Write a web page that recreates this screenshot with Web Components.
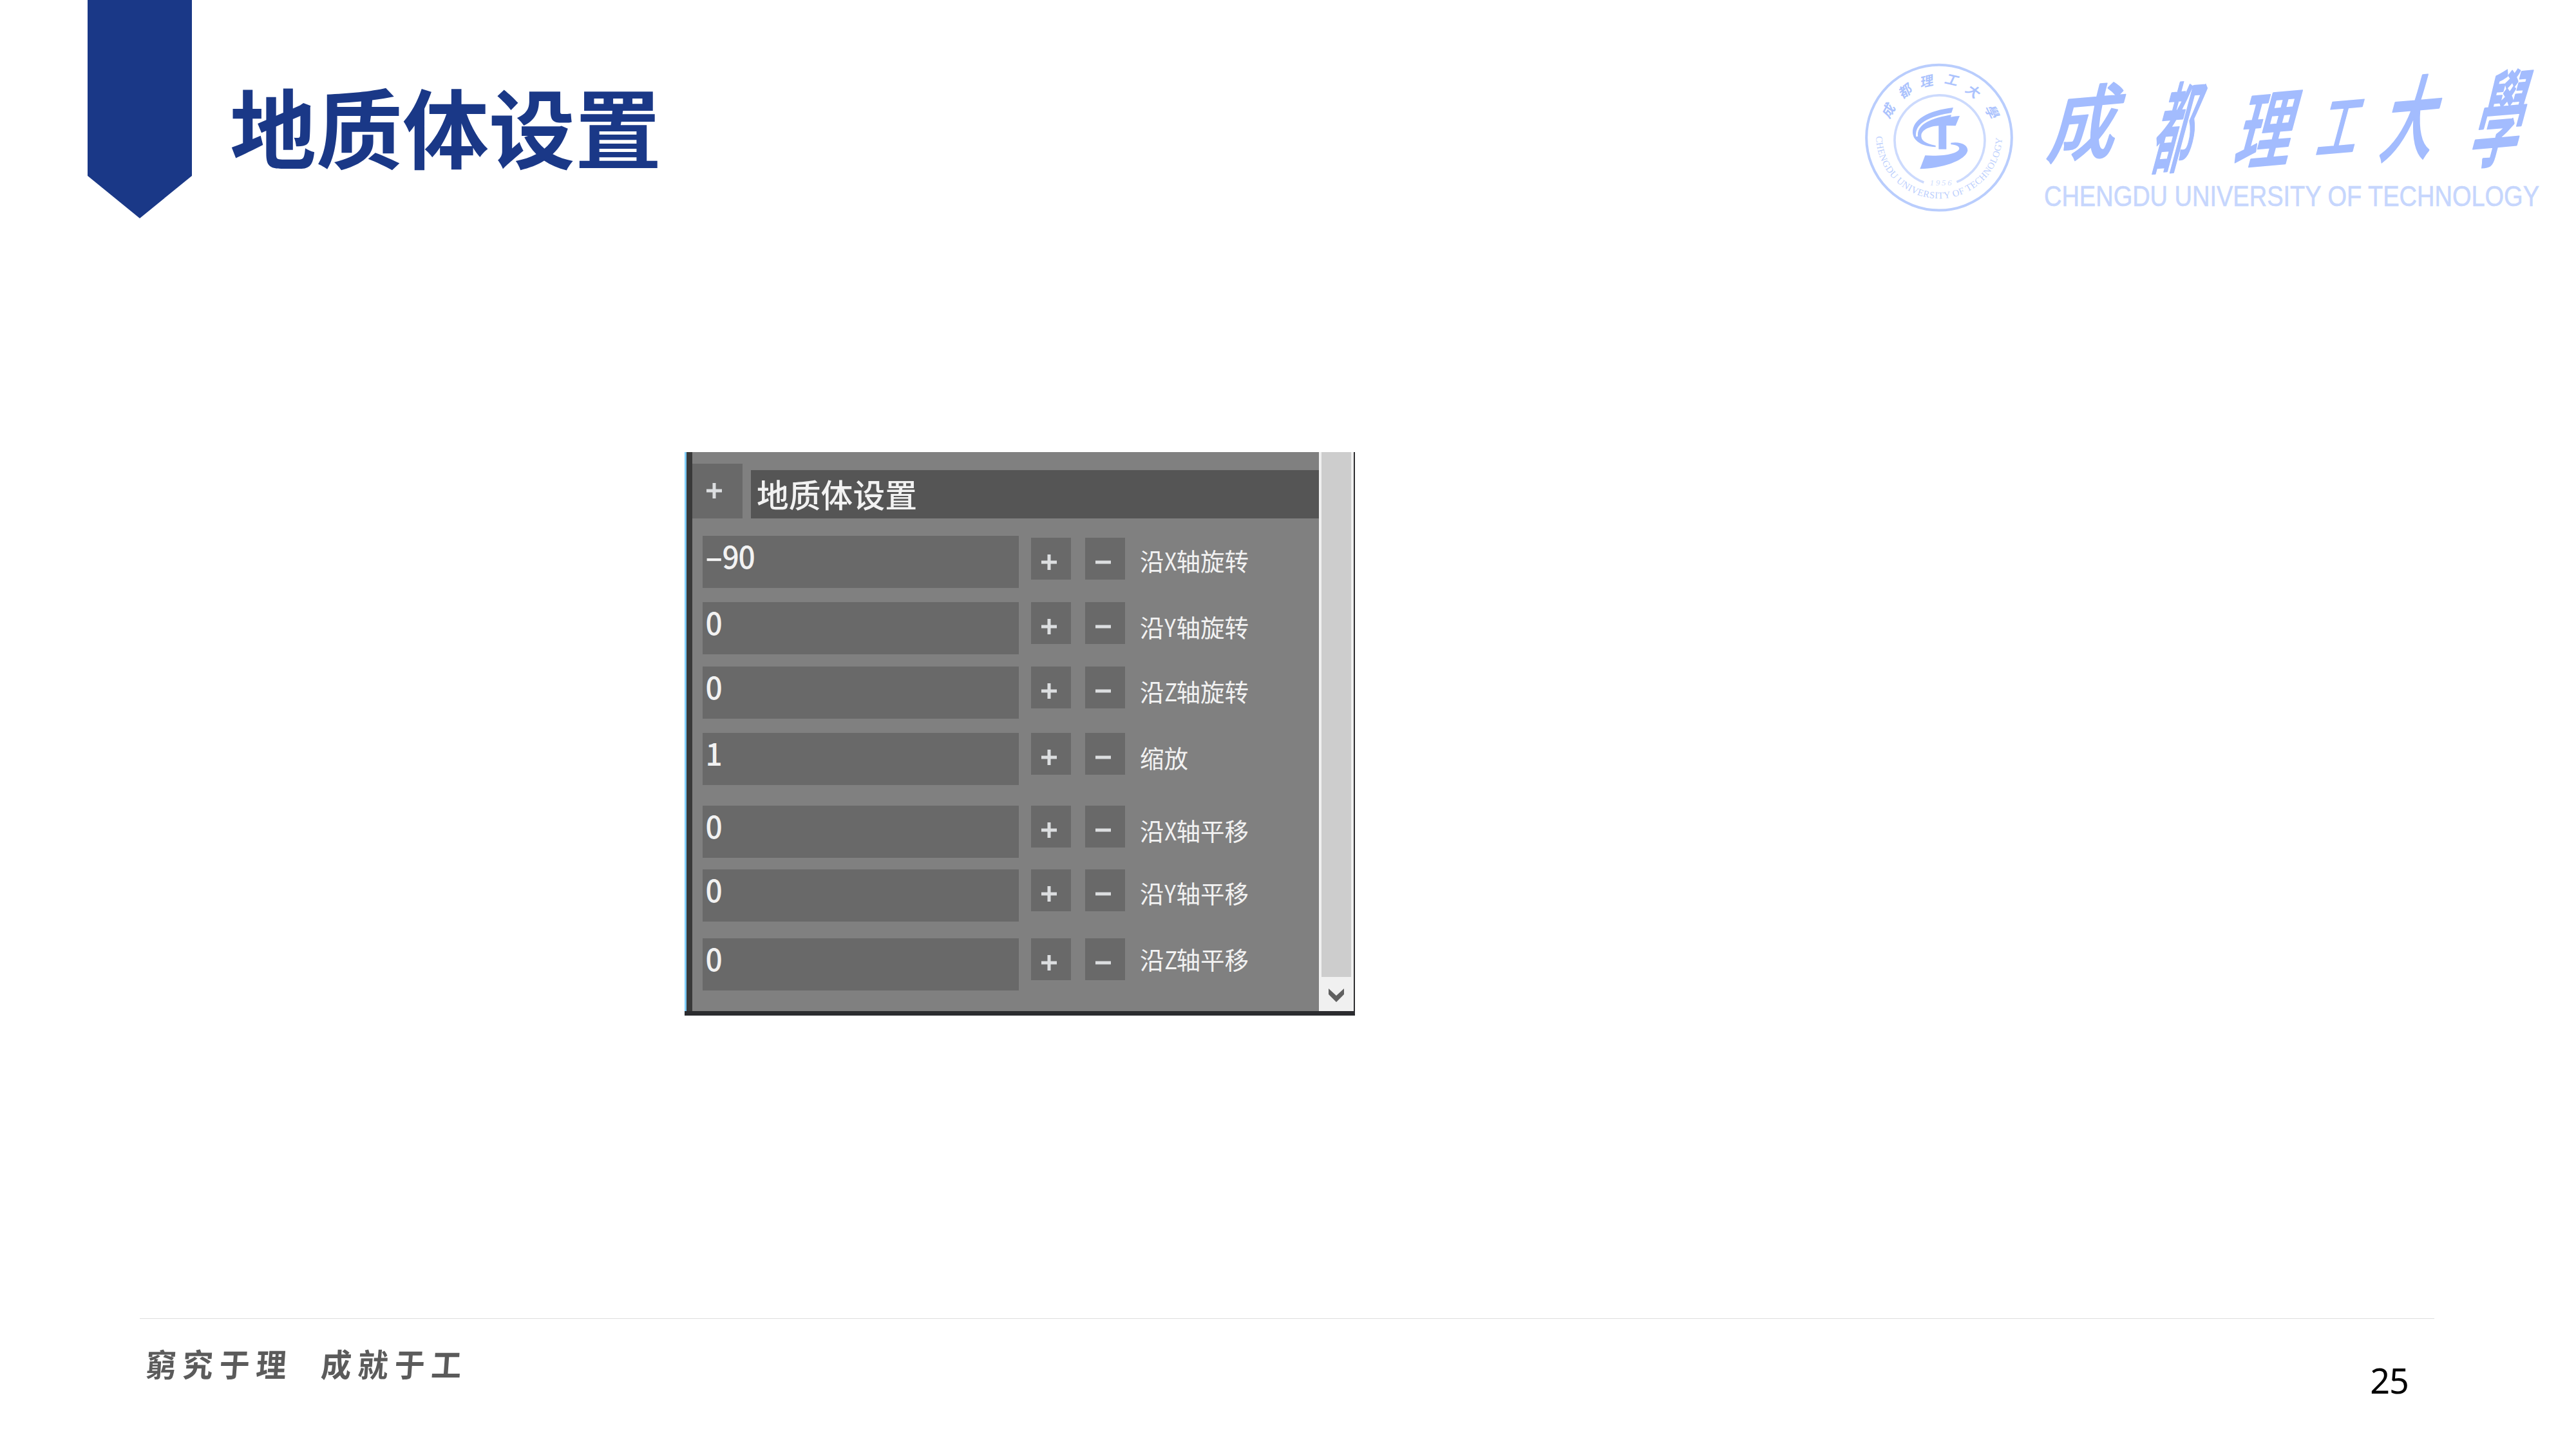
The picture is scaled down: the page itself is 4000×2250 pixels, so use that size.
<!DOCTYPE html>
<html lang="zh-CN">
<head>
<meta charset="utf-8">
<title>地质体设置</title>
<style>
html,body{margin:0;padding:0;background:#fff}
body{width:4000px;height:2250px;overflow:hidden;font-family:"Noto Sans CJK SC",sans-serif}
</style>
</head>
<body>
<slide-page>
  <slide-header slot="header">地质体设置</slide-header>
  <settings-panel>
    <span slot="title">地质体设置</span>
    <param-row value="-90" axis="X" kind="旋转" style="--gap:28px;--btn-y:3px"></param-row>
    <param-row value="0" axis="Y" kind="旋转" style="--gap:22px"></param-row>
    <param-row value="0" axis="Z" kind="旋转" style="--gap:19px"></param-row>
    <param-row value="1" kind="缩放" style="--gap:22px"></param-row>
    <param-row value="0" axis="X" kind="平移" style="--gap:32px"></param-row>
    <param-row value="0" axis="Y" kind="平移" style="--gap:18px;--label-y:38px"></param-row>
    <param-row value="0" axis="Z" kind="平移" style="--gap:26px;--label-y:34px"></param-row>
  </settings-panel>
  <slide-footer slot="footer" page="25"></slide-footer>
</slide-page>
<script>
const define = (name, render) => customElements.define(name, class extends HTMLElement {
  connectedCallback() {
    if (this.shadowRoot) return;
    this.attachShadow({mode: 'open'}).innerHTML = render(this);
  }
});

define('slide-page', () => `
<style>
:host{display:flex;flex-direction:column;width:4000px;height:2250px;background:#fff}
main{flex:1;padding:352px 0 0 1063px}
</style>
<slot name="header"></slot><main><slot></slot></main><slot name="footer"></slot>`);

define('slide-header', () => `
<style>
:host{display:flex;height:350px;align-items:flex-start;color:#1a3887}
.ribbon{display:block;margin-left:136px;width:162px;height:339px}
h1{margin:127px 0 0 59px;font-size:134px;line-height:134px;font-weight:700;flex:1;white-space:nowrap}
university-seal{margin-top:70px}
university-name{margin-top:80px;margin-left:-20px}
</style>
<svg class="ribbon" viewBox="0 0 162 339"><path d="M0 0H162V273L81 339L0 273Z" fill="#1a3887"/></svg>
<h1><slot></slot></h1>
<university-seal></university-seal>
<university-name></university-name>`);

define('university-seal', () => {
  const ring = [['成',218,303,-61],['都',297,212,-36],['理',397,168,-12],['工',515,162,13],['大',613,216,37],['學',700,313,64]];
  return `
<style>:host{display:block;width:300px;height:280px}svg{display:block;overflow:visible}</style>
<svg width="300" height="280" viewBox="0 0 900 840">
<circle cx="453" cy="431" r="338.500" fill="none" stroke="#b9cdfd" stroke-width="12"/>
<path d="M382 640A210 210 0 1 1 535 638" fill="none" stroke="#ccdafd" stroke-width="11"/>
<g fill="#a3bcfe">
<path d="M519 291C400 305 328 348 330 408C332 446 372 472 437 475L437 468C388 458 368 444 370 420C373 394 410 378 451 376V485H487V375L530 376L549 330C534 331 524 331 508 335L511 315Z"/>
<path d="M508 455C556 448 587 466 586 492C578 534 476 574 364 577L388 514C480 520 545 503 547 482C547 470 530 465 508 463Z"/>
</g>
<path d="M350 426C342 366 410 334 524 318" fill="none" stroke="#fff" stroke-width="9"/>
<g fill="#acc3fd" font-family="Noto Sans CJK TC" font-weight="700" font-size="62" text-anchor="middle">
${ring.map(([c,x,y,a]) => `<text transform="translate(${x} ${y}) rotate(${a}) skewX(-12)" y="23">${c}</text>`).join('')}
</g>
<path id="arc" d="M159 421A294 294 0 0 0 747 421" fill="none"/>
<text font-family="Liberation Serif" font-size="44" fill="#bccffd"><textPath href="#arc" startOffset="4" textLength="908" lengthAdjust="spacing">CHENGDU UNIVERSITY OF TECHNOLOGY</textPath></text>
<text x="410" y="654" font-family="Liberation Serif" font-style="italic" font-size="38" fill="#d0ddfd" textLength="102">1956</text>
</svg>`;
});

define('university-name', () => {
  const word = [['成',102,110,1.06,1.24],['都',243,117,.62,1.5],['理',383,120,.88,1.3],['工',496,115,.62,1.05],['大',608,103,.82,1.4],['學',746,103,.76,1.6]];
  return `
<style>:host{display:block;width:860px;height:270px}svg{display:block;overflow:visible}</style>
<svg width="860" height="270" viewBox="0 0 860 270">
<g fill="#a3bcfe" stroke="#a3bcfe" stroke-width="2" stroke-linejoin="round" font-family="Noto Sans CJK TC" font-weight="500" font-size="100" text-anchor="middle">
${word.map(([c,x,y,sx,sy]) => `<text transform="translate(${x} ${y}) rotate(-5) skewX(-20) scale(${sx} ${sy})" y="38">${c}</text>`).join('')}
</g>
<text x="34" y="240" font-family="Liberation Sans" font-size="44.500" fill="#c6d6fd" stroke="#c6d6fd" stroke-width=".6" textLength="769" lengthAdjust="spacingAndGlyphs">CHENGDU UNIVERSITY OF TECHNOLOGY</text>
</svg>`;
});

define('settings-panel', () => `
<style>
:host{display:flex;flex-direction:column;width:1041px;height:875px;background:#808080;color:#f2f2f2}
.view{display:flex;height:868px}
.edge{width:9px;border-left:3px solid #7fcdfd;background:#393939}
.content{width:973px}
header{display:flex;align-items:flex-end;height:85px;margin-top:18px;margin-bottom:-1px}
icon-button{--w:78px;--h:85px;--cx:34px;--cy:42px}
h2{margin:0 0 0 13px;flex:1;height:75px;background:#555;font-weight:500;font-size:49.800px;line-height:72px;box-sizing:border-box;padding-left:9px}
.base{height:7px;background:#2b2c2f}
</style>
<div class="view">
 <div class="edge"></div>
 <div class="content">
  <header><icon-button sign="+"></icon-button><h2><slot name="title"></slot></h2></header>
  <slot></slot>
 </div>
 <scroll-track></scroll-track>
</div>
<div class="base"></div>`);

define('icon-button', el => `
<style>
:host{display:block;width:var(--w,62px);height:var(--h,65px);background:#696969;flex:none}
svg{display:block;width:26px;height:26px;padding:calc(var(--cy,38px) - 13px) 0 0 calc(var(--cx,28px) - 13px)}
</style>
<svg viewBox="0 0 26 26"><path d="${el.getAttribute('sign') === '+' ? 'M1 13H25M13 1V25' : 'M1 13H25'}" stroke="#dcdee0" stroke-width="5" fill="none"/></svg>`);

define('param-row', el => {
  const axis = el.getAttribute('axis'), kind = el.getAttribute('kind');
  const cells = [...el.getAttribute('value')].map(c => `<span class="${c === '-' ? 'dash' : ''}">${c}</span>`).join('');
  return `
<style>
:host{display:flex;height:81px;margin-top:var(--gap);padding-left:16px;align-items:flex-start}
.field{width:491px;height:81px;background:#696969;font-size:48px;font-weight:500;line-height:58px;box-sizing:border-box;padding:1px 0 0 5px;display:flex}
.field span{width:25.500px;display:flex;justify-content:center;transform:scaleX(.96)}
.field .dash{transform:scaleX(1.75)}
icon-button{margin:var(--btn-y,0px) 0 0 19px;--cy:38px}
icon-button+icon-button{margin-left:22px}
.label{height:60px;margin:calc(var(--label-y,40px) - 32px) 0 0 23px;font-size:37.500px;line-height:60px;white-space:nowrap}
.label i{font-style:normal;display:inline-block;width:19px;text-align:center;transform:translateX(-1px) scaleX(.88)}
</style>
<div class="field">${cells}</div>
<icon-button sign="+"></icon-button><icon-button sign="-"></icon-button>
<div class="label">${axis ? `沿<i>${axis}</i>轴` : ''}${kind}</div>`;
});

define('scroll-track', () => `
<style>
:host{display:flex;flex-direction:column;width:54px;height:868px;background:#f0f0f0;border-right:2px solid #2e2e30}
.thumb{height:815px;margin:0 4px;background:#cdcdcd}
svg{display:block;margin:18px 0 0 15px}
</style>
<div class="thumb"></div>
<svg width="24" height="21" viewBox="0 0 24 21"><path d="M0 0L12 11L24 0V9L12 21L0 9Z" fill="#606060"/></svg>`);

define('slide-footer', el => `
<style>
:host{display:block;height:203px}
.rule{height:1px;background:#dedede;margin:0 220px 0 217px}
.bar{display:flex;justify-content:space-between;align-items:flex-start}
.motto{display:flex;margin:34px 0 0 222px;font-size:47px;line-height:70px;font-weight:700;color:#5b5b5b;white-space:pre}
.motto span{width:57px;text-align:center;transform:skewX(-4deg) scaleY(1.06)}
.motto b{width:44px}
.page{font-family:"Noto Sans","Open Sans",sans-serif;font-size:54px;letter-spacing:-1px;line-height:70px;color:#000;margin:60px 260px 0 0}
</style>
<div class="rule"></div>
<div class="bar"><div class="motto">${[...'窮究于理 成就于工'].map(c => c === ' ' ? '<b> </b>' : `<span>${c}</span>`).join('')}</div>
<div class="page">${el.getAttribute('page')}</div></div>`);
</script>
</body>
</html>
